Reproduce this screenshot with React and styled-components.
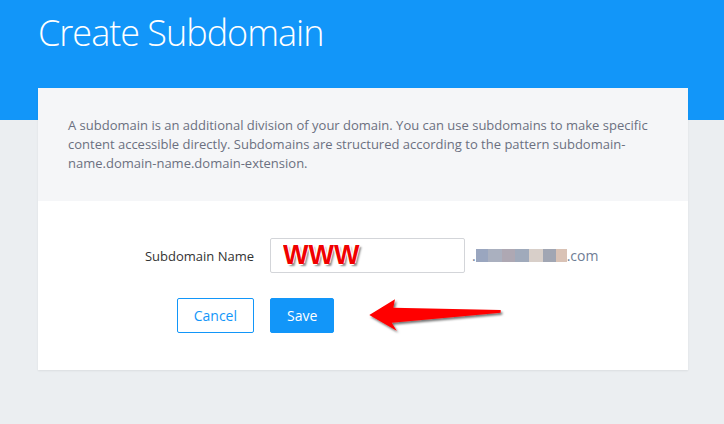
import React from "react";
import styled, { createGlobalStyle } from "styled-components";

const Global = createGlobalStyle`
  html, body { margin: 0; padding: 0; }
  body { font-family: "Open Sans", "Noto Sans", sans-serif; }
  * { box-sizing: border-box; }
`;

const Page = styled.div`
  min-height: 100vh;
  background: linear-gradient(#1296f9 0 120px, #ebeef1 120px);
  padding: 8px 36px 0 38px;
`;

const Title = styled.h1`
  margin: 0 0 31px;
  font-family: "Open Sans", sans-serif;
  font-weight: 300;
  font-size: 36px;
  line-height: 49px;
  letter-spacing: -1px;
  color: #ffffff;
`;

const Card = styled.section`
  position: relative;
  width: 650px;
  background: #ffffff;
  box-shadow: 0 1px 2px rgba(0, 0, 0, 0.07);
`;

const Intro = styled.p`
  margin: 0;
  background: #f5f6f8;
  padding: 28px 30px;
  font-size: 13px;
  line-height: 19px;
  color: #6b7080;
`;

const Form = styled.div`
  display: grid;
  grid-template-columns: 216px 195px auto;
  column-gap: 16px;
  row-gap: 25px;
  align-items: center;
  padding: 37px 0;
`;

const Label = styled.label`
  justify-self: end;
  font-size: 13px;
  color: #333;
`;

const Input = styled.input`
  width: 195px;
  height: 35px;
  border: 1px solid #d3d5d9;
  border-radius: 2px;
  padding: 0 12px;
  font-family: "Liberation Sans", Arial, sans-serif;
  font-weight: 700;
  font-size: 27px;
  color: #f00000;
  text-shadow: -1px -1px 0 #fff, 1px -1px 0 #fff, -1px 1px 0 #fff, 2px 2px 2px rgba(0,0,0,0.45);
  outline: none;
`;

const Suffix = styled.div`
  margin-left: -9px;
  display: flex;
  align-items: center;
  font-size: 14px;
  color: #6f7d95;
`;

const Blur = styled.span`
  display: inline-block;
  width: ${(p) => p.w}px;
  height: 13px;
  background: ${(p) => p.c};
`;

const Button = styled.button`
  height: 35px;
  padding: 0 16px;
  border-radius: 2px;
  font-family: "Open Sans", sans-serif;
  font-size: 14px;
  border: 1px solid #1296f9;
  background: ${(p) => (p.primary ? "#1296f9" : "#ffffff")};
  color: ${(p) => (p.primary ? "#ffffff" : "#1296f9")};
  justify-self: ${(p) => (p.primary ? "start" : "end")};
  cursor: pointer;
`;

const Arrow = styled.svg`
  position: absolute;
  left: 325px;
  top: 205px;
  overflow: visible;
`;

const blocks = [
  ["#9aa6bf", 12],
  ["#aab0bf", 14],
  ["#aea8b3", 13],
  ["#a0aabb", 14],
  ["#d8cfc9", 14],
  ["#a1a6b3", 13],
  ["#d9c2b5", 11],
];

export default function App() {
  return (
    <>
      <Global />
      <Page>
        <Title>Create Subdomain</Title>
        <Card>
          <Intro>
            A subdomain is an additional division of your domain. You can use subdomains to make specific
            content accessible directly. Subdomains are structured according to the pattern
            subdomain-name.domain-name.domain-extension.
          </Intro>
          <Form>
            <Label>Subdomain Name</Label>
            <Input readOnly defaultValue="WWW" />
            <Suffix>
              <span>.</span>
              {blocks.map(([c, w], i) => (
                <Blur key={i} c={c} w={w} />
              ))}
              <span>.com</span>
            </Suffix>
            <Button>Cancel</Button>
            <Button primary>Save</Button>
          </Form>
          <Arrow width="140" height="40" viewBox="0 0 140 40">
            <defs>
              <filter id="sh" x="-10%" y="-30%" width="130%" height="180%">
                <feDropShadow dx="1.5" dy="2" stdDeviation="1.2" floodColor="#000" floodOpacity="0.55" />
              </filter>
            </defs>
            <polygon
              points="6.3,22 32,6.3 30.3,14.7 137.7,17 137.7,19.7 28.7,29.7 33.7,37.7"
              fill="#ff0000"
              filter="url(#sh)"
            />
          </Arrow>
        </Card>
      </Page>
    </>
  );
}
